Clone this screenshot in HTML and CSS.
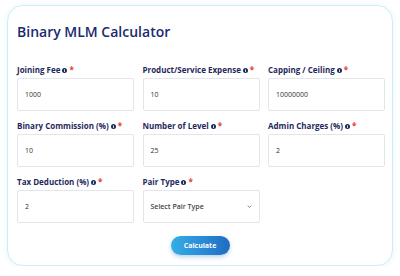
FILE: index.html
```html
<!DOCTYPE html>
<html>
<head>
<meta charset="utf-8">
<link rel="stylesheet" href="styles.css">
</head>
<body>
<div class="card">
  <h1 class="title">Binary MLM Calculator</h1>
  <div class="grid">
    <div class="field">
      <label class="label">Joining Fee <span class="info"><svg viewBox="0 0 10 10" width="5" height="5"><circle cx="5" cy="5" r="5" fill="#1f2a5c"/><rect x="4.2" y="4" width="1.6" height="4" fill="#fff"/><rect x="4.2" y="2" width="1.6" height="1.4" fill="#fff"/></svg></span><span class="req">*</span></label>
      <div class="input">1000</div>
    </div>
    <div class="field">
      <label class="label">Product/Service Expense <span class="info"><svg viewBox="0 0 10 10" width="5" height="5"><circle cx="5" cy="5" r="5" fill="#1f2a5c"/><rect x="4.2" y="4" width="1.6" height="4" fill="#fff"/><rect x="4.2" y="2" width="1.6" height="1.4" fill="#fff"/></svg></span><span class="req">*</span></label>
      <div class="input">10</div>
    </div>
    <div class="field">
      <label class="label">Capping / Ceiling <span class="info"><svg viewBox="0 0 10 10" width="5" height="5"><circle cx="5" cy="5" r="5" fill="#1f2a5c"/><rect x="4.2" y="4" width="1.6" height="4" fill="#fff"/><rect x="4.2" y="2" width="1.6" height="1.4" fill="#fff"/></svg></span><span class="req">*</span></label>
      <div class="input">10000000</div>
    </div>
    <div class="field">
      <label class="label">Binary Commission (%) <span class="info"><svg viewBox="0 0 10 10" width="5" height="5"><circle cx="5" cy="5" r="5" fill="#1f2a5c"/><rect x="4.2" y="4" width="1.6" height="4" fill="#fff"/><rect x="4.2" y="2" width="1.6" height="1.4" fill="#fff"/></svg></span><span class="req">*</span></label>
      <div class="input">10</div>
    </div>
    <div class="field">
      <label class="label">Number of Level <span class="info"><svg viewBox="0 0 10 10" width="5" height="5"><circle cx="5" cy="5" r="5" fill="#1f2a5c"/><rect x="4.2" y="4" width="1.6" height="4" fill="#fff"/><rect x="4.2" y="2" width="1.6" height="1.4" fill="#fff"/></svg></span><span class="req">*</span></label>
      <div class="input">25</div>
    </div>
    <div class="field">
      <label class="label">Admin Charges (%) <span class="info"><svg viewBox="0 0 10 10" width="5" height="5"><circle cx="5" cy="5" r="5" fill="#1f2a5c"/><rect x="4.2" y="4" width="1.6" height="4" fill="#fff"/><rect x="4.2" y="2" width="1.6" height="1.4" fill="#fff"/></svg></span><span class="req">*</span></label>
      <div class="input">2</div>
    </div>
    <div class="field">
      <label class="label">Tax Deduction (%) <span class="info"><svg viewBox="0 0 10 10" width="5" height="5"><circle cx="5" cy="5" r="5" fill="#1f2a5c"/><rect x="4.2" y="4" width="1.6" height="4" fill="#fff"/><rect x="4.2" y="2" width="1.6" height="1.4" fill="#fff"/></svg></span><span class="req">*</span></label>
      <div class="input">2</div>
    </div>
    <div class="field">
      <label class="label">Pair Type <span class="info"><svg viewBox="0 0 10 10" width="5" height="5"><circle cx="5" cy="5" r="5" fill="#1f2a5c"/><rect x="4.2" y="4" width="1.6" height="4" fill="#fff"/><rect x="4.2" y="2" width="1.6" height="1.4" fill="#fff"/></svg></span><span class="req">*</span></label>
      <div class="input select"><span>Select Pair Type</span><svg viewBox="0 0 8 5" width="5" height="3"><path d="M1 1 L4 4 L7 1" fill="none" stroke="#555" stroke-width="1.2"/></svg></div>
    </div>
  </div>
  <div class="actions"><button class="btn">Calculate</button></div>
</div>
</body>
</html>
```
FILE: styles.css
```css
* { box-sizing: border-box; }
body {
  margin: 0;
  background: #ffffff;
  font-family: "Open Sans", "DejaVu Sans", sans-serif;
}
.card {
  margin: 5px 7px 0 7px;
  width: 386px;
  height: 261px;
  border: 1px solid #cdeef4;
  border-radius: 16px;
  box-shadow: 0 0 6px rgba(120, 200, 230, 0.18);
  background: #fff;
  padding: 16px 9px 0 9px;
}
.title {
  margin: 0 0 23px 0;
  font-size: 14px;
  line-height: 19px;
  font-weight: 600;
  color: #1a2b6d;
}
.grid {
  display: grid;
  grid-template-columns: 117px 117px 117px;
  column-gap: 8.5px;
  row-gap: 9px;
}
.field {
  display: flex;
  flex-direction: column;
}
.label {
  font-size: 8px;
  line-height: 12px;
  font-weight: 700;
  color: #1f2a5c;
  margin-bottom: 2px;
  white-space: nowrap;
  display: flex;
  align-items: center;
}
.info {
  display: inline-flex;
  margin-left: 2px;
}
.req {
  color: #e53935;
  margin-left: 2px;
  font-size: 8px;
}
.input {
  height: 33px;
  border: 1px solid #e2e5ea;
  border-radius: 2px;
  padding: 0 7px;
  font-size: 7px;
  color: #333;
  display: flex;
  align-items: center;
}
.select {
  justify-content: space-between;
  font-weight: 600;
  color: #444;
}
.actions {
  display: flex;
  justify-content: center;
  margin-top: 13px;
}
.btn {
  width: 59px;
  height: 19px;
  border: none;
  border-radius: 10px;
  background: linear-gradient(90deg, #34aee6 0%, #2a8ad6 55%, #1f6cc0 100%);
  color: #fff;
  font-family: "Open Sans", sans-serif;
  font-size: 7px;
  font-weight: 700;
  padding: 0;
  box-shadow: 0 2px 4px rgba(30, 110, 190, 0.3);
}
```
